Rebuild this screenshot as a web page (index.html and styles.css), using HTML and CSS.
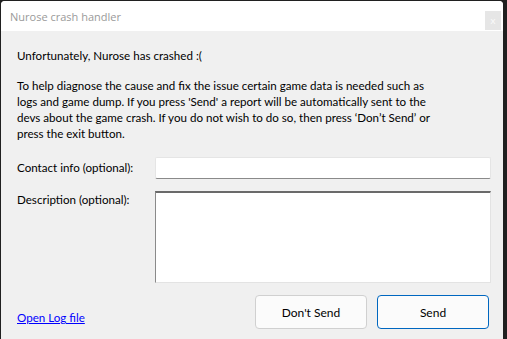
FILE: index.html
```html
<!DOCTYPE html>
<html lang="en">

<head>
  <meta charset="UTF-8">
  <meta name="viewport" content="width=device-width, initial-scale=1.0">
  <title>Nurose crash handler</title>
  <link rel="stylesheet" href="styles.css">
</head>

<body>
  <div class="window">
    <div class="titlebar">
      <span class="title">Nurose crash handler</span>
      <button class="close">x</button>
    </div>
    <div class="content">
      <p class="headline">Unfortunately, Nurose has crashed :(</p>
      <p class="info">To help diagnose the cause and fix the issue certain game data is needed such as<br>
        logs and game dump. If you press 'Send' a report will be automatically sent to the<br>
        devs about the game crash. If you do not wish to do so, then press ‘Don’t Send’ or<br>
        press the exit button.</p>
      <div class="form">
        <label class="label" for="contact">Contact info (optional):</label>
        <input class="contact" id="contact" type="text">
        <label class="label" for="description">Description (optional):</label>
        <textarea class="description" id="description"></textarea>
      </div>
      <div class="footer">
        <a class="log-link" href="#">Open Log file</a>
        <div class="buttons">
          <button class="btn">Don't Send</button>
          <button class="btn primary">Send</button>
        </div>
      </div>
    </div>
  </div>
</body>

</html>
```

FILE: styles.css
```css
body {
  margin: 0;
  background: #202020;
  font-family: Lato, "Noto Sans", sans-serif;
  font-size: 11.6px;
  color: #000;
  height: 339px;
  overflow: hidden;
}

.window {
  width: 502px;
  height: 338px;
  margin: 1px 0 0 1px;
  background: #f0f0f0;
  border-radius: 4px 4px 0 0;
  display: flex;
  flex-direction: column;
  overflow: hidden;
}

.titlebar {
  height: 30px;
  background: #fff;
  display: flex;
  align-items: center;
  justify-content: space-between;
  padding: 0 2px 0 9px;
}

.title {
  color: #9a9a9a;
  font-family: "Open Sans", sans-serif;
  font-size: 11px;
}

.close {
  width: 16px;
  height: 19px;
  border: none;
  background: #e6e6e6;
  color: #fafafa;
  font-family: inherit;
  font-size: 10px;
  padding: 0;
  margin-top: 8px;
}

.content {
  flex: 1;
  padding: 17px 11px 10px 16px;
  display: flex;
  flex-direction: column;
}

.headline,
.info {
  margin: 0;
  line-height: 16px;
}

.info {
  margin-top: 14px;
  white-space: nowrap;
}

.form {
  display: grid;
  grid-template-columns: 138px 336px;
  row-gap: 12px;
  margin-top: 15px;
}

.label {
  line-height: 16px;
  padding-top: 1px;
}

.form .label:first-child {
  padding-top: 0;
  align-self: center;
}

.contact {
  height: 22px;
  box-sizing: border-box;
  border: 1px solid #e5e5e5;
  border-bottom-color: #8a8a8a;
  background: #fff;
  margin: 0;
  font-family: inherit;
  font-size: 12px;
  border-radius: 2px;
}

.description {
  height: 92px;
  box-sizing: border-box;
  border: 1px solid #e3e3e3;
  border-top: 2px solid #6a6a6a;
  border-left: 1px solid #8a8a8a;
  background: #fff;
  margin: 0;
  resize: none;
  font-family: inherit;
  font-size: 12px;
}

.footer {
  display: flex;
  justify-content: space-between;
  align-items: flex-end;
  margin-top: 12px;
}

.log-link {
  color: #0000ff;
  text-decoration: underline;
  line-height: 16px;
  margin-bottom: 3px;
}

.buttons {
  display: flex;
  gap: 10px;
  margin-right: 3px;
}

.btn {
  width: 112px;
  height: 34px;
  background: #fbfbfb;
  border: 1px solid #d0d0d0;
  border-radius: 4px;
  font-family: inherit;
  font-size: 12px;
  color: #000;
  padding: 0;
}

.btn.primary {
  border-color: #0067c0;
}
```
